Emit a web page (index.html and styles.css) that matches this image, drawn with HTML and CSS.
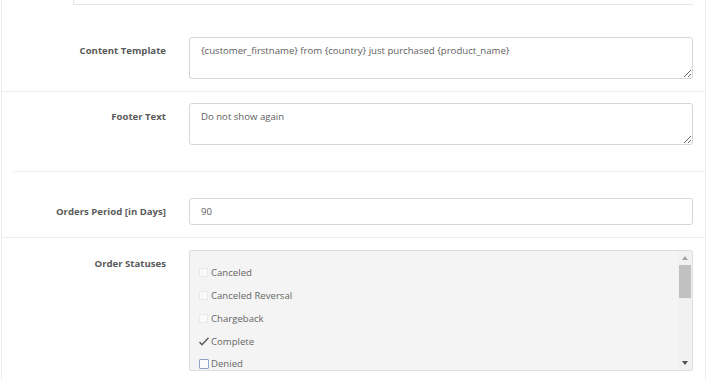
FILE: index.html
```html
<!DOCTYPE html>
<html>
<head>
<meta charset="utf-8">
<link rel="stylesheet" href="styles.css">
</head>
<body>
<div class="panel">
  <div class="top-stub"></div>

  <div class="row row-content">
    <label class="label">Content Template</label>
    <div class="control">
      <textarea class="textarea">{customer_firstname} from {country} just purchased {product_name}</textarea>
    </div>
  </div>

  <div class="row row-footer">
    <label class="label">Footer Text</label>
    <div class="control">
      <textarea class="textarea">Do not show again</textarea>
    </div>
  </div>

  <div class="divider"></div>

  <div class="row row-period">
    <label class="label">Orders Period [in Days]</label>
    <div class="control">
      <input class="input" type="text" value="90">
    </div>
  </div>

  <div class="row row-statuses">
    <label class="label">Order Statuses</label>
    <div class="control">
      <div class="status-box">
        <ul class="status-list">
          <li class="status"><span class="cb cb-faded"></span>Canceled</li>
          <li class="status"><span class="cb cb-faded"></span>Canceled Reversal</li>
          <li class="status"><span class="cb cb-faded"></span>Chargeback</li>
          <li class="status"><span class="cb cb-checked"><svg width="10" height="9" viewBox="0 0 10 9"><polyline points="0.5,5 3,7.8 9.5,0.8" fill="none" stroke="#555" stroke-width="1.3"/></svg></span>Complete</li>
          <li class="status"><span class="cb cb-blue"></span>Denied</li>
        </ul>
        <div class="scrollbar">
          <div class="sb-btn"><span class="arrow-up"></span></div>
          <div class="sb-thumb"></div>
          <div class="sb-track"></div>
          <div class="sb-btn"><span class="arrow-down"></span></div>
        </div>
      </div>
    </div>
  </div>
</div>
</body>
</html>
```

FILE: styles.css
```css
html, body {
  margin: 0;
  padding: 0;
  background: #fff;
}
body {
  font-family: "Open Sans", "Liberation Sans", sans-serif;
  font-size: 9.6px;
  color: #555;
}
.panel {
  box-sizing: border-box;
  width: 705px;
  height: 380px;
  margin-left: 1px;
  border-left: 1px solid #ededed;
  border-right: 1px solid #ededed;
  overflow: hidden;
}
.top-stub {
  margin-left: 71px;
  width: 619px;
  height: 4px;
  border-left: 1px solid #e6e6e6;
  border-bottom: 1px solid #e6e6e6;
}
.row {
  display: flex;
  gap: 23px;
}
.label {
  box-sizing: border-box;
  width: 164px;
  flex: none;
  text-align: right;
  font-weight: 700;
  font-size: 9.6px;
  line-height: 14px;
  padding-top: 6.5px;
  color: #5a5a5a;
}
.control {
  width: 504px;
  flex: none;
}
.row-content {
  padding-top: 32px;
  padding-bottom: 12px;
  border-bottom: 1px solid #ededed;
}
.row-footer {
  padding-top: 11px;
  padding-bottom: 26px;
}
.divider {
  height: 1px;
  margin-left: 11px;
  background: #ededed;
}
.row-period {
  padding-top: 26px;
  padding-bottom: 12px;
  border-bottom: 1px solid #ededed;
}
.row-statuses {
  padding-top: 12px;
}
.textarea {
  display: block;
  box-sizing: border-box;
  width: 504px;
  height: 42px;
  margin: 0;
  padding: 5.5px 11px;
  border: 1px solid #d6d6d6;
  border-radius: 3px;
  font-family: "Open Sans", "Liberation Sans", sans-serif;
  font-size: 9.6px;
  line-height: 14px;
  color: #5e5e5e;
  background: #fff;
  resize: vertical;
  outline: none;
}
.input {
  display: block;
  box-sizing: border-box;
  width: 504px;
  height: 27px;
  margin: 0;
  padding: 0 11px;
  border: 1px solid #d6d6d6;
  border-radius: 3px;
  font-family: "Open Sans", "Liberation Sans", sans-serif;
  font-size: 9.6px;
  color: #5e5e5e;
  background: #fff;
  outline: none;
}
.status-box {
  box-sizing: border-box;
  display: flex;
  width: 504px;
  height: 121px;
  border: 1px solid #dedede;
  border-radius: 2px;
  background: #f4f4f4;
  overflow: hidden;
}
.status-list {
  flex: 1;
  list-style: none;
  margin: 0;
  padding: 10.5px 0 0 9px;
}
.status {
  display: flex;
  align-items: center;
  height: 22.75px;
  font-size: 9.6px;
  color: #666;
}
.cb {
  box-sizing: border-box;
  display: inline-flex;
  align-items: center;
  justify-content: center;
  width: 9px;
  height: 9px;
  margin-right: 3px;
  flex: none;
}
.cb-faded {
  border: 1px solid #e9e9e9;
  background: #f9f9f9;
}
.cb-checked {
  width: 10px;
  margin-right: 2px;
}
.cb-blue {
  width: 10px;
  height: 10px;
  margin-right: 2px;
  border: 1px solid #8ea6c6;
  border-radius: 1px;
  background: #fbfbfb;
}
.scrollbar {
  display: flex;
  flex-direction: column;
  width: 14px;
  flex: none;
  background: #f1f1f1;
}
.sb-btn {
  height: 14px;
  display: flex;
  align-items: center;
  justify-content: center;
  flex: none;
}
.arrow-up {
  width: 0;
  height: 0;
  border-left: 3.5px solid transparent;
  border-right: 3.5px solid transparent;
  border-bottom: 4px solid #a3a3a3;
}
.arrow-down {
  width: 0;
  height: 0;
  border-left: 3.5px solid transparent;
  border-right: 3.5px solid transparent;
  border-top: 4px solid #505050;
}
.sb-thumb {
  height: 33px;
  margin: 0 1px;
  background: #c1c1c1;
  flex: none;
}
.sb-track {
  flex: 1;
}
```
